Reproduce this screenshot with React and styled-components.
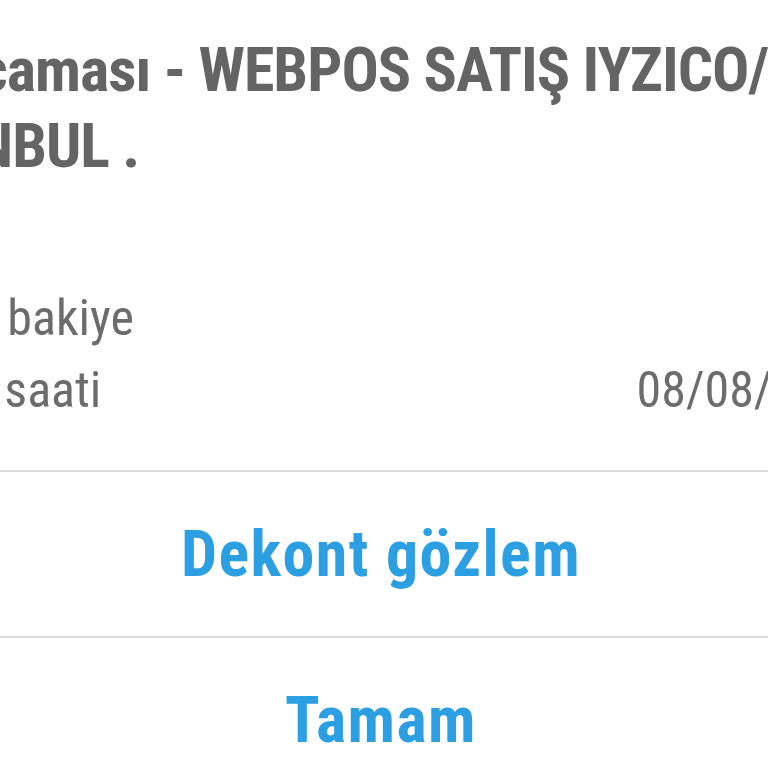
import React from "react"
import styled, { createGlobalStyle } from "styled-components"

const GlobalStyle = createGlobalStyle`
    html, body {
        margin: 0;
        padding: 0;
        background: #FFFFFF;
        overflow: hidden;
    }
    body {
        font-family: "Roboto Condensed", "DejaVu Sans Condensed", "Liberation Sans Narrow", sans-serif;
    }
`

const details = [
    { label: "Kalan bakiye", value: "0,00 TL" },
    { label: "İşlem saati", value: "08/08/2023 14:35" },
]

export default function App(){
    return(
    <Screen>
        <GlobalStyle/>
        <Dialog>
            <Title>
                Harcaması - WEBPOS SATIŞ IYZICO/<br/>ISTANBUL .
            </Title>
            <Details>
                {details.map((item, index) => {
                    return (
                    <DetailRow key={index}>
                        <span>{item.label}</span>
                        <span>{item.value}</span>
                    </DetailRow>
                    )
                })}
            </Details>
            <ActionButton>Dekont gözlem</ActionButton>
            <ActionButton>Tamam</ActionButton>
        </Dialog>
    </Screen>
)
}

const Screen = styled.div`
    width: 768px;
    height: 768px;
    overflow: hidden;
    background: #FFFFFF;
`

const Dialog = styled.div`
    width: 1032px;
    margin-left: -135px;
    display: flex;
    flex-direction: column;
`

const Title = styled.div`
    margin-left: -3px;
    padding: 32px 30px 0 0;
    text-indent: 33px;
    font-weight: 700;
    font-size: 62px;
    line-height: 76px;
    color: #646464;
    letter-spacing: -1px;
    white-space: nowrap;
`

const Details = styled.div`
    display: flex;
    flex-direction: column;
    padding: 98px 30px 44px 20px;
    margin-right: -126px;
`

const DetailRow = styled.div`
    display: flex;
    justify-content: space-between;
    align-items: baseline;
    font-weight: 400;
    font-size: 50px;
    line-height: 72px;
    color: #6c6c6c;
    white-space: nowrap;
`

const ActionButton = styled.button`
    height: 166px;
    border: 0;
    border-top: 2px solid #DCDCDC;
    background: #FFFFFF;
    padding: 0;
    font-family: inherit;
    font-weight: 700;
    font-size: 64px;
    letter-spacing: 1.4px;
    color: #2C9FE2;
    cursor: pointer;
`
